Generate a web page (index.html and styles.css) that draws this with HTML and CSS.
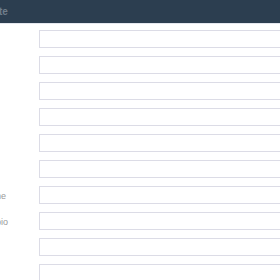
FILE: index.html
```html
<!DOCTYPE html>
<html lang="en">
    <head>
        <meta charset="UTF-8" />
        <meta name="viewport" content="width=device-width, initial-scale=1.0" />
        <title>Update</title>
        <link rel="stylesheet" href="styles.css">
    </head>
    <body>
        <div class="page">
            <div class="header">
                <span class="title">Update</span>
            </div>
            <form class="form">
                <label for="f1">Name</label>
                <input type="text" id="f1" />
                <label for="f2">Email</label>
                <input type="text" id="f2" />
                <label for="f3">City</label>
                <input type="text" id="f3" />
                <label for="f4">Street</label>
                <input type="text" id="f4" />
                <label for="f5">Zip</label>
                <input type="text" id="f5" />
                <label for="f6">State</label>
                <input type="text" id="f6" />
                <label for="f7">Secondary telephone</label>
                <input type="text" id="f7" />
                <label for="f8">Short professional bio</label>
                <input type="text" id="f8" />
                <label for="f9">Phone</label>
                <input type="text" id="f9" />
                <label for="f10">Notes</label>
                <input type="text" id="f10" />
            </form>
        </div>
    </body>
</html>
```

FILE: styles.css
```css
body {
    font-family: "Liberation Sans", Arial, sans-serif;
    background-color: #fff;
    margin: 0;
    padding: 0;
    overflow: hidden;
}
.page {
    margin-left: -79px;
    width: 480px;
}
.header {
    background-color: #2c3e50;
    height: 23px;
    border-bottom: 1px solid #e4e7ee;
    display: flex;
    align-items: center;
    padding-left: 53px;
}
.title {
    color: #6f7d8b;
    font-size: 10px;
    font-weight: bold;
}
.form {
    display: grid;
    grid-template-columns: 88px 1fr;
    column-gap: 30px;
    row-gap: 8px;
    padding-top: 6px;
}
label {
    align-self: center;
    white-space: nowrap;
    color: #9a9a9a;
    font-size: 9px;
    padding-top: 2px;
}
input {
    height: 18px;
    box-sizing: border-box;
    margin: 0;
    padding: 2px 4px;
    border: 1px solid #dcdce6;
    border-radius: 0;
}
```
